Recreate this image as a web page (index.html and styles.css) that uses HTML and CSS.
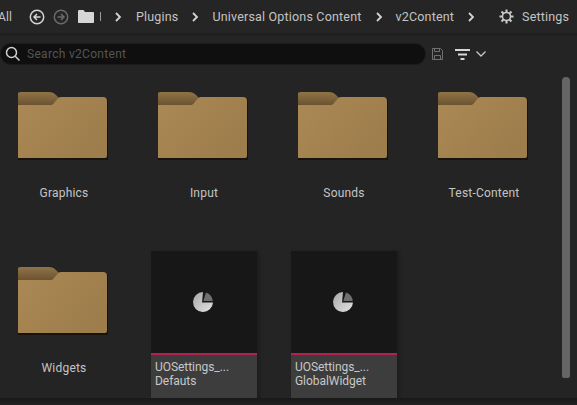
FILE: index.html
```html
<!DOCTYPE html>
<html>
<head>
<meta charset="utf-8"/>
<title>v2Content</title>
<link rel="stylesheet" href="styles.css">
</head>
<body>
<svg class="defs" width="0" height="0">
  <defs>
    <linearGradient id="folderBody" x1="0" y1="0" x2="1" y2="0.6">
      <stop offset="0" stop-color="#ab8955"/>
      <stop offset="1" stop-color="#9d7d4c"/>
    </linearGradient>
    <linearGradient id="folderTab" x1="0" y1="0" x2="0" y2="1">
      <stop offset="0" stop-color="#917347"/>
      <stop offset="1" stop-color="#654f2e"/>
    </linearGradient>
    <linearGradient id="pieFill" x1="0" y1="0" x2="1" y2="1">
      <stop offset="0" stop-color="#a8a8a8"/>
      <stop offset="1" stop-color="#e2e2e2"/>
    </linearGradient>
    <symbol id="folder" viewBox="2 0 92 70">
      <path d="M1 5a4 4 0 0 1 4-4h28c3 0 5 1 7 3l4 4v8H1z" fill="url(#folderTab)"/>
      <path d="M1 14h33l11-8h42a4 4 0 0 1 4 4v58H1z" fill="#18130c" transform="translate(1 1)"/>
      <path d="M1 15a1 1 0 0 1 1-1h32c2 0 3-.5 4-2l3-3.500c1-1.500 2-2.500 4-2.500h42a4 4 0 0 1 4 4v55a2 2 0 0 1-2 2H3a2 2 0 0 1-2-2z" fill="url(#folderBody)"/>
    </symbol>
    <symbol id="pie" viewBox="0 0 22 22">
      <path d="M11 1a10 10 0 1 0 10 10.500H10z" fill="url(#pieFill)"/>
      <path d="M14 1.500a10 10 0 0 1 6.800 8.500h-9.500z" fill="#6f6f6f"/>
    </symbol>
  </defs>
</svg>

<div class="toolbar">
  <span class="crumb all">All</span>
  <svg class="nav nav-back" width="16" height="16" viewBox="0 0 16 16" fill="none" stroke="#d4d4d4" stroke-width="1.500">
    <circle cx="8" cy="8" r="6.700"/>
    <path d="M11.500 8H5M8 5 5 8l3 3"/>
  </svg>
  <svg class="nav nav-fwd" width="16" height="16" viewBox="0 0 16 16" fill="none" stroke="#6a6a6a" stroke-width="1.500">
    <circle cx="8" cy="8" r="6.700"/>
    <path d="M4.500 8H11M8 5l3 3-3 3"/>
  </svg>
  <svg class="root" width="16" height="13" viewBox="0 0 16 13">
    <path d="M0 1.500C0 .7.500 0 1 0h4.500L7 2h8c.6 0 1 .4 1 1v9c0 .6-.4 1-1 1H1c-.6 0-1-.4-1-1z" fill="#d6d6d6"/>
  </svg>
  <span class="stub"></span>
  <svg class="chev" width="7" height="10" viewBox="0 0 7 10" fill="none" stroke="#d4d4d4" stroke-width="1.800"><path d="m1 1 4 4-4 4"/></svg>
  <span class="crumb">Plugins</span>
  <svg class="chev chev-tight" width="7" height="10" viewBox="0 0 7 10" fill="none" stroke="#d4d4d4" stroke-width="1.800"><path d="m1 1 4 4-4 4"/></svg>
  <span class="crumb">Universal Options Content</span>
  <svg class="chev" width="7" height="10" viewBox="0 0 7 10" fill="none" stroke="#d4d4d4" stroke-width="1.800"><path d="m1 1 4 4-4 4"/></svg>
  <span class="crumb crumb-tight">v2Content</span>
  <svg class="chev" width="7" height="10" viewBox="0 0 7 10" fill="none" stroke="#d4d4d4" stroke-width="1.800"><path d="m1 1 4 4-4 4"/></svg>
  <svg class="gear" width="15" height="15" viewBox="0 0 16 16" fill="none" stroke="#c8c8c8">
    <circle cx="8" cy="8" r="4.300" stroke-width="1.600"/>
    <path d="M8 .5v3M8 12.500v3M.5 8h3M12.500 8h3M2.700 2.700l2.100 2.100M11.200 11.200l2.100 2.100M13.300 2.700l-2.100 2.100M4.800 11.200l-2.100 2.100" stroke-width="2.200"/>
  </svg>
  <span class="crumb settings">Settings</span>
</div>

<div class="search-row">
  <div class="search">
    <svg width="16" height="16" viewBox="0 0 16 16" fill="none" stroke="#d0d0d0" stroke-width="1.500">
      <circle cx="6.500" cy="6.500" r="5"/>
      <path d="m10.200 10.200 4.300 4.300"/>
    </svg>
    <span>Search v2Content</span>
  </div>
  <svg class="save" width="11" height="12" viewBox="0 0 11 12" fill="none" stroke="#707070">
    <path d="M.5.500h8l2 2v9H.5z"/>
    <path d="M2.500.500v3h5v-3M2.500 11.500v-4h6v4"/>
  </svg>
  <svg class="filter" width="15" height="11" viewBox="0 0 15 11" fill="#d8d8d8">
    <rect width="15" height="2"/>
    <rect x="3" y="4.500" width="9" height="2"/>
    <rect x="5.500" y="9" width="4" height="2"/>
  </svg>
  <svg class="caret" width="10" height="6" viewBox="0 0 10 6" fill="none" stroke="#c8c8c8" stroke-width="1.300"><path d="m.5.500 4.500 4.500L9.500.500"/></svg>
</div>

<div class="browser">
  <div class="grid">
    <div class="tile">
      <svg class="folder" width="92" height="70"><use href="#folder"/></svg>
      <div class="tile-name">Graphics</div>
    </div>
    <div class="tile">
      <svg class="folder" width="92" height="70"><use href="#folder"/></svg>
      <div class="tile-name">Input</div>
    </div>
    <div class="tile">
      <svg class="folder" width="92" height="70"><use href="#folder"/></svg>
      <div class="tile-name">Sounds</div>
    </div>
    <div class="tile">
      <svg class="folder" width="92" height="70"><use href="#folder"/></svg>
      <div class="tile-name">Test-Content</div>
    </div>
    <div class="tile">
      <svg class="folder" width="92" height="70"><use href="#folder"/></svg>
      <div class="tile-name">Widgets</div>
    </div>
    <div class="card">
      <div class="thumb"><svg class="pie" width="22" height="22"><use href="#pie"/></svg></div>
      <div class="card-name">UOSettings_...<br>Defauts</div>
    </div>
    <div class="card">
      <div class="thumb"><svg class="pie" width="22" height="22"><use href="#pie"/></svg></div>
      <div class="card-name">UOSettings_...<br>GlobalWidget</div>
    </div>
  </div>
  <div class="scrollbar"></div>
</div>

<div class="footer"></div>
</body>
</html>
```

FILE: styles.css
```css
html, body {
  margin: 0;
  height: 100%;
  overflow: hidden;
}

body {
  width: 577px;
  height: 405px;
  display: flex;
  flex-direction: column;
  background-color: #242424;
  color: #c4c4c4;
  font-family: Roboto, "Liberation Sans", sans-serif;
  font-size: 12px;
}

.defs {
  position: absolute;
}

.toolbar {
  height: 33px;
  flex: none;
  display: flex;
  align-items: center;
  background-color: #252525;
  border-bottom: 3px solid #1f1f1f;
  white-space: nowrap;
  overflow: hidden;
}

.crumb {
  color: #c4c4c4;
  margin-left: 14px;
  font-size: 12.500px;
  letter-spacing: 0.18px;
}

.crumb-tight {
  margin-left: 13px;
}

.crumb.all {
  margin-left: -8px;
  width: 20px;
  text-align: right;
  font-size: 12px;
  letter-spacing: 0.1px;
}

.nav-back {
  margin-left: 17px;
}

.nav-fwd {
  margin-left: 8px;
}

.root {
  margin-left: 9px;
}

.stub {
  width: 1px;
  height: 9px;
  margin-left: 6px;
  background-color: #9a9a9a;
}

.chev {
  margin-left: 14px;
  flex: none;
}

.chev-tight {
  margin-left: 13px;
}

.gear {
  margin-left: 24px;
}

.settings {
  margin-left: 8px;
}

.search-row {
  height: 28px;
  flex: none;
  display: flex;
  align-items: center;
  padding-top: 4px;
}

.search {
  width: 426px;
  height: 22px;
  box-sizing: border-box;
  display: flex;
  align-items: center;
  gap: 6px;
  padding-left: 4px;
  border: 1px solid #1a1a1a;
  border-radius: 11px;
  background-color: #0f0f0f;
  color: #555;
  font-size: 12px;
  letter-spacing: 0.3px;
}

.save {
  margin-left: 6px;
}

.filter {
  margin-left: 12px;
}

.caret {
  margin-left: 6px;
}

.browser {
  flex: 1;
  min-height: 0;
  display: flex;
  overflow: hidden;
}

.grid {
  width: 563px;
  display: grid;
  grid-template-columns: repeat(4, 106px);
  grid-auto-rows: 175px;
  column-gap: 34px;
  padding: 8px 0 0 11px;
  box-sizing: border-box;
}

.tile {
  display: flex;
  flex-direction: column;
  align-items: center;
}

.folder {
  margin-top: 15px;
}

.tile-name {
  margin-top: 25px;
  line-height: 14px;
  text-align: center;
  letter-spacing: 0.2px;
}

.card {
  width: 106px;
  height: 175px;
  display: flex;
  flex-direction: column;
  box-shadow: 2px 1px 3px #1c1c1c;
}

.thumb {
  height: 102px;
  flex: none;
  display: flex;
  align-items: center;
  justify-content: center;
  background-color: #171717;
  border-bottom: 2px solid #b5204f;
}

.pie {
  margin: 0 2px 1px 0;
}

.card-name {
  flex: 1;
  padding: 5px 4px;
  background-color: #3d3d3d;
  line-height: 14px;
  color: #c8c8c8;
  letter-spacing: -0.05px;
}

.scrollbar {
  width: 8px;
  height: 301px;
  margin: 9px 0 0 -1px;
  border-radius: 4px 4px 2px 2px;
  background-color: #656565;
}

.footer {
  height: 7px;
  flex: none;
  background-image: linear-gradient(#191919, #222);
}
```
